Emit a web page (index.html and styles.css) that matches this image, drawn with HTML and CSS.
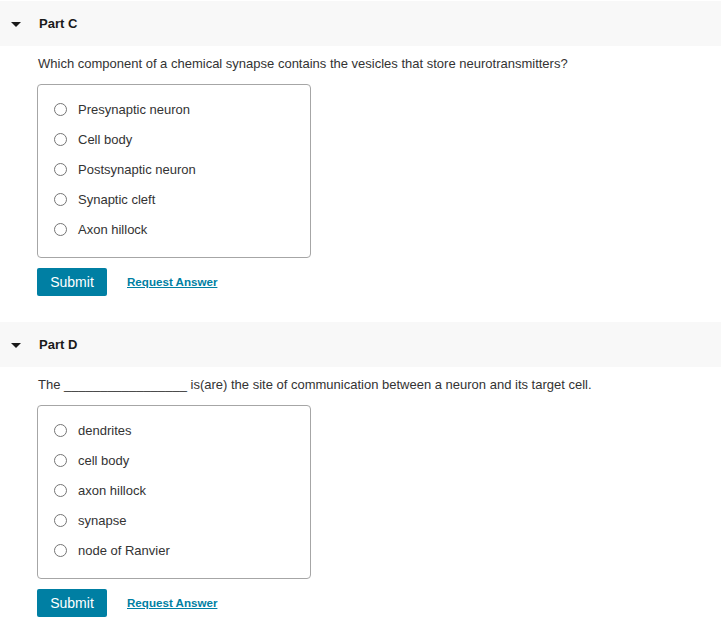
FILE: index.html
```html
<!DOCTYPE html>
<html>
<head>
<meta charset="utf-8">
<link rel="stylesheet" href="styles.css">
</head>
<body>
<section class="part part-c">
  <div class="part-header">
    <span class="caret"></span>
    <h2 class="part-title">Part C</h2>
  </div>
  <div class="part-body">
    <p class="question">Which component of a chemical synapse contains the vesicles that store neurotransmitters?</p>
    <div class="choices">
      <label class="choice"><span class="radio"></span><span class="choice-text">Presynaptic neuron</span></label>
      <label class="choice"><span class="radio"></span><span class="choice-text">Cell body</span></label>
      <label class="choice"><span class="radio"></span><span class="choice-text">Postsynaptic neuron</span></label>
      <label class="choice"><span class="radio"></span><span class="choice-text">Synaptic cleft</span></label>
      <label class="choice"><span class="radio"></span><span class="choice-text">Axon hillock</span></label>
    </div>
    <div class="actions">
      <button class="submit">Submit</button>
      <a class="request" href="#">Request Answer</a>
    </div>
  </div>
</section>
<section class="part part-d">
  <div class="part-header">
    <span class="caret"></span>
    <h2 class="part-title">Part D</h2>
  </div>
  <div class="part-body">
    <p class="question">The _________________ is(are) the site of communication between a neuron and its target cell.</p>
    <div class="choices">
      <label class="choice"><span class="radio"></span><span class="choice-text">dendrites</span></label>
      <label class="choice"><span class="radio"></span><span class="choice-text">cell body</span></label>
      <label class="choice"><span class="radio"></span><span class="choice-text">axon hillock</span></label>
      <label class="choice"><span class="radio"></span><span class="choice-text">synapse</span></label>
      <label class="choice"><span class="radio"></span><span class="choice-text">node of Ranvier</span></label>
    </div>
    <div class="actions">
      <button class="submit">Submit</button>
      <a class="request" href="#">Request Answer</a>
    </div>
  </div>
</section>
</body>
</html>
```

FILE: styles.css
```css
html, body {
  margin: 0;
  padding: 0;
  background: #ffffff;
}
body {
  font-family: "Liberation Sans", Arial, sans-serif;
  font-size: 13px;
  color: #333333;
}
.part-c {
  padding-top: 1px;
}
.part-d {
  margin-top: 26px;
}
.part-header {
  height: 45px;
  background: #f8f8f8;
  display: flex;
  align-items: center;
  padding-left: 11px;
}
.caret {
  width: 0;
  height: 0;
  border-left: 5.5px solid transparent;
  border-right: 5.5px solid transparent;
  border-top: 5px solid #1a1a1a;
  margin-top: 1px;
}
.part-title {
  margin: 0 0 0 18px;
  font-size: 13px;
  font-weight: bold;
  color: #1a1a1a;
}
.part-body {
  padding-left: 37px;
}
.question {
  margin: 10px 0 0 1px;
  line-height: 16px;
}
.choices {
  width: 272px;
  margin-top: 12px;
  border: 1px solid #a6a6a6;
  border-radius: 4px;
  padding: 9px 0 13px 0;
  display: flex;
  flex-direction: column;
}
.choice {
  display: flex;
  align-items: center;
  height: 30px;
  padding-left: 16px;
}
.radio {
  width: 11px;
  height: 11px;
  border: 1px solid #757575;
  border-radius: 50%;
  box-sizing: content-box;
}
.choice-text {
  margin-left: 11px;
}
.actions {
  display: flex;
  align-items: center;
  margin-top: 10px;
}
.submit {
  width: 70px;
  height: 28px;
  border: none;
  border-radius: 2px;
  background: #007fa3;
  color: #ffffff;
  font-family: "Liberation Sans", Arial, sans-serif;
  font-size: 14px;
  padding: 0;
}
.request {
  margin-left: 20px;
  color: #007fa3;
  font-weight: bold;
  font-size: 11.6px;
  text-decoration: underline;
  margin-top: -2px;
}
```
